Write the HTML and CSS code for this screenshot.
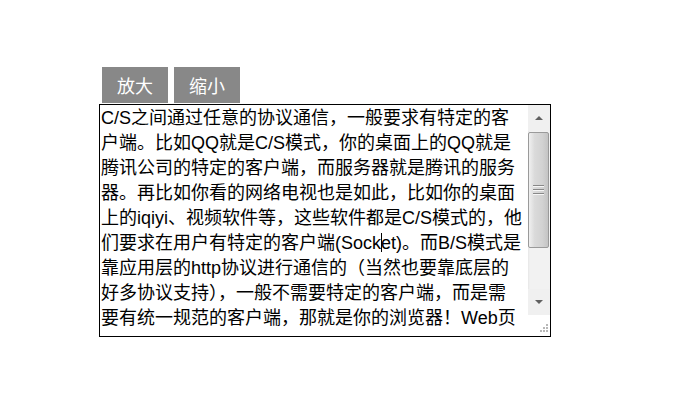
FILE: index.html
```html
<!DOCTYPE html>
<html lang="zh-CN">
<head>
<meta charset="utf-8">
<title>放大缩小</title>
<link rel="stylesheet" href="styles.css">
</head>
<body>
<div class="page">
  <div class="toolbar">
    <button class="btn" type="button">放大</button>
    <button class="btn" type="button">缩小</button>
  </div>
  <div class="box">
    <div class="text">
      <div class="line">C/S之间通过任意的协议通信，一般要求有特定的客</div>
      <div class="line">户端。比如QQ就是C/S模式，你的桌面上的QQ就是</div>
      <div class="line">腾讯公司的特定的客户端，而服务器就是腾讯的服务</div>
      <div class="line">器。再比如你看的网络电视也是如此，比如你的桌面</div>
      <div class="line">上的iqiyi、视频软件等，这些软件都是C/S模式的，他</div>
      <div class="line">们要求在用户有特定的客户端(Sock<span class="caret"></span>et)。而B/S模式是</div>
      <div class="line">靠应用层的http协议进行通信的（当然也要靠底层的</div>
      <div class="line">好多协议支持），一般不需要特定的客户端，而是需</div>
      <div class="line">要有统一规范的客户端，那就是你的浏览器！Web页</div>
    </div>
    <div class="scroll">
      <div class="sbtn"><span class="arrow up"></span></div>
      <div class="track">
        <div class="thumb">
          <div class="grip"><i></i><i></i><i></i></div>
        </div>
      </div>
      <div class="sbtn"><span class="arrow down"></span></div>
      <div class="corner">
        <svg width="11" height="11" viewBox="0 0 11 11">
          <g fill="#b8b8b8">
            <rect x="8" y="0" width="2" height="2"/>
            <rect x="5" y="3" width="2" height="2"/>
            <rect x="8" y="3" width="2" height="2"/>
            <rect x="2" y="6" width="2" height="2"/>
            <rect x="5" y="6" width="2" height="2"/>
            <rect x="8" y="6" width="2" height="2"/>
          </g>
        </svg>
      </div>
    </div>
  </div>
</div>
</body>
</html>
```
FILE: styles.css
```css
html, body {
  margin: 0;
  padding: 0;
  background: #fff;
}
.page {
  padding: 67px 0 0 99px;
  font-family: "Liberation Sans", "Noto Sans CJK SC", sans-serif;
}
.toolbar {
  display: flex;
  gap: 6px;
  margin-left: 3px;
}
.btn {
  width: 66px;
  height: 36px;
  border: none;
  margin: 0;
  padding: 0;
  background: #888888;
  color: #fff;
  font-family: "Noto Sans CJK SC", sans-serif;
  font-size: 18px;
  line-height: 36px;
}
.box {
  margin-top: 1px;
  width: 450px;
  height: 231px;
  border: 1px solid #000;
  display: flex;
  overflow: hidden;
}
.text {
  flex: 1;
  padding: 1px 0 0 1px;
  font-size: 18px;
  line-height: 25px;
  color: #000;
  overflow: hidden;
}
.line {
  white-space: nowrap;
}
.caret {
  display: inline-block;
  width: 0;
  height: 19px;
  border-left: 1px solid #000;
  margin-right: -1px;
  vertical-align: -3px;
}
.scroll {
  width: 22px;
  display: flex;
  flex-direction: column;
  background: #f0f0f0;
}
.sbtn {
  height: 26px;
  display: flex;
  align-items: center;
  justify-content: center;
  background: #f0f0f0;
}
.arrow {
  width: 0;
  height: 0;
  border-left: 4px solid transparent;
  border-right: 4px solid transparent;
}
.arrow.up {
  border-bottom: 4px solid #606060;
}
.arrow.down {
  border-top: 4px solid #606060;
}
.track {
  flex: 1;
  padding: 1px 1px 0 0;
  background: linear-gradient(to right, #e6e6e6 0, #f2f2f2 2px, #f2f2f2 100%);
}
.thumb {
  height: 114px;
  border: 1px solid #9a9a9a;
  border-radius: 2px;
  background: linear-gradient(to right, #f0f0f0 0, #dadada 30%, #d2d2d2 70%, #c4c4c4 100%);
  display: flex;
  align-items: center;
  justify-content: center;
}
.grip {
  display: flex;
  flex-direction: column;
  gap: 2px;
}
.grip i {
  display: block;
  width: 11px;
  height: 2px;
  background: linear-gradient(to bottom, #888 0, #888 1px, #f6f6f6 1px);
}
.corner {
  height: 21px;
  background: #fff;
  display: flex;
  align-items: flex-end;
  justify-content: flex-end;
  padding: 0 1px 1px 0;
  box-sizing: border-box;
}
```
